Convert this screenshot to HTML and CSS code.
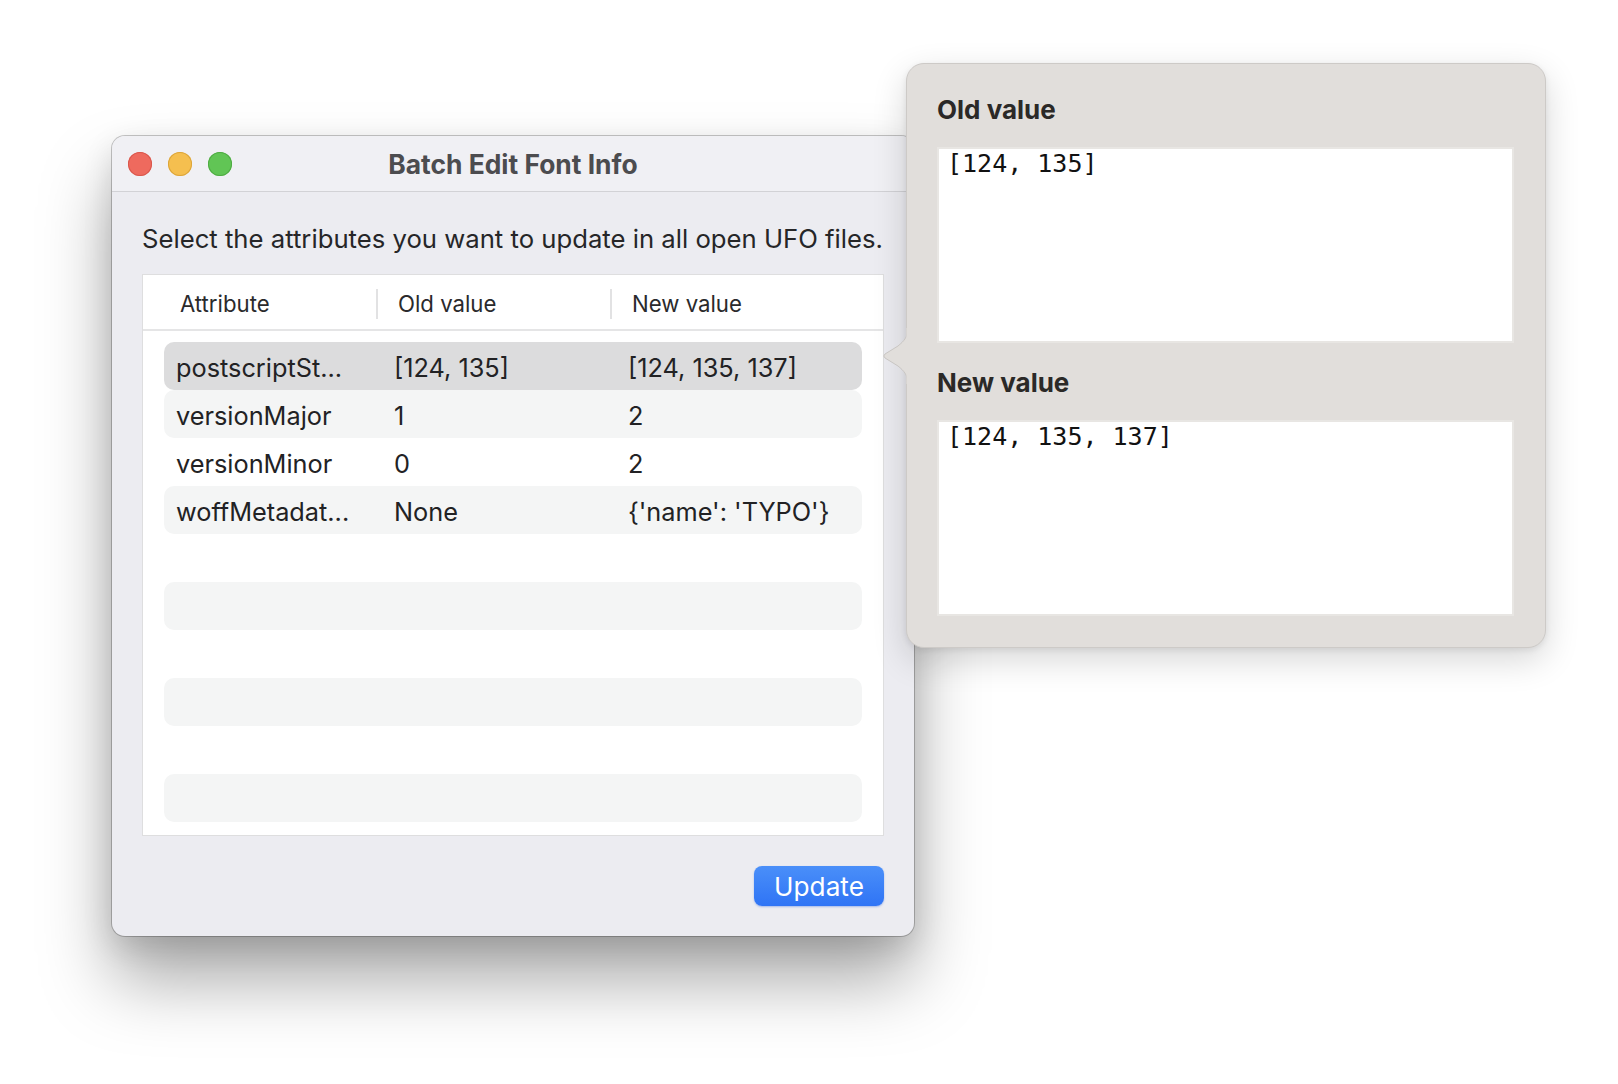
FILE: index.html
```html
<!DOCTYPE html>
<html>
<head>
<meta charset="utf-8">
<link rel="stylesheet" href="styles.css">
</head>
<body>
<div class="desktop">
  <div class="window">
    <div class="titlebar">
      <div class="lights">
        <span class="light red"></span>
        <span class="light yellow"></span>
        <span class="light green"></span>
      </div>
      <div class="title">Batch Edit Font Info</div>
      <div></div>
    </div>
    <div class="content">
      <p class="intro">Select the attributes you want to update in all open UFO files.</p>
      <div class="table">
        <div class="thead">
          <div class="th th-first">Attribute</div>
          <div class="th"><span class="th-label">Old value</span></div>
          <div class="th"><span class="th-label">New value</span></div>
        </div>
        <div class="tbody">
          <div class="row selected"><span>postscriptSt...</span><span>[124, 135]</span><span>[124, 135, 137]</span></div>
          <div class="row alt"><span>versionMajor</span><span>1</span><span>2</span></div>
          <div class="row"><span>versionMinor</span><span>0</span><span>2</span></div>
          <div class="row alt"><span>woffMetadat...</span><span>None</span><span>{'name': 'TYPO'}</span></div>
          <div class="row"></div>
          <div class="row alt"></div>
          <div class="row"></div>
          <div class="row alt"></div>
          <div class="row"></div>
          <div class="row alt"></div>
        </div>
      </div>
      <div class="footer">
        <button class="btn">Update</button>
      </div>
    </div>
  </div>

  <div class="popover">
    <svg class="arrow" width="26" height="56" viewBox="0 0 26 56">
      <path d="M26 0 C26 9 22 13 16 18 L3 26 Q0.5 28 3 30 L16 38 C22 43 26 47 26 56 Z" fill="#e1dedb" stroke="#c9c6c3" stroke-width="1"/>
      <rect x="24.5" y="0" width="2" height="56" fill="#e1dedb"/>
    </svg>
    <div class="pop-heading">Old value</div>
    <div class="pop-field">[124, 135]</div>
    <div class="pop-heading second">New value</div>
    <div class="pop-field">[124, 135, 137]</div>
  </div>
</div>
</body>
</html>
```

FILE: styles.css
```css
* { box-sizing: border-box; }
html, body {
  margin: 0;
  padding: 0;
  background: #ffffff;
}
body {
  font-family: Inter, "Liberation Sans", sans-serif;
}
.desktop {
  position: relative;
  width: 1618px;
  height: 1084px;
  overflow: hidden;
  background: #ffffff;
}
.window {
  position: absolute;
  left: 112px;
  top: 136px;
  width: 802px;
  height: 800px;
  border-radius: 13px;
  background: #ececf1;
  box-shadow: 0 0 0 1px rgba(0,0,0,0.22), 0 44px 70px rgba(0,0,0,0.34), 0 10px 30px rgba(0,0,0,0.12);
  overflow: hidden;
  display: flex;
  flex-direction: column;
}
.titlebar {
  height: 56px;
  flex: none;
  background: #f0f0f4;
  border-bottom: 1px solid #d2d2d6;
  display: grid;
  grid-template-columns: 1fr auto 1fr;
  align-items: center;
}
.lights {
  display: flex;
  gap: 16px;
  padding-left: 16px;
}
.light {
  width: 24px;
  height: 24px;
  border-radius: 50%;
  display: block;
}
.red { background: #ee6a5e; box-shadow: inset 0 0 0 1px #d9574c; }
.yellow { background: #f5bf4f; box-shadow: inset 0 0 0 1px #dca53a; }
.green { background: #61c555; box-shadow: inset 0 0 0 1px #4fab43; }
.title {
  font-weight: 700;
  font-size: 26.4px;
  color: #4c4c4f;
}
.content {
  flex: 1;
  display: flex;
  flex-direction: column;
  padding: 32px 30px 30px 30px;
}
.intro {
  margin: 0 0 20px 0;
  height: 30px;
  line-height: 30px;
  font-size: 25.7px;
  color: #262628;
  white-space: nowrap;
}
.table {
  height: 562px;
  background: #ffffff;
  border: 1px solid #dededf;
  display: flex;
  flex-direction: column;
}
.thead {
  height: 56px;
  flex: none;
  border-bottom: 2px solid #e5e5e6;
  display: grid;
  grid-template-columns: 233px 234px 1fr;
  align-items: center;
  padding-top: 3px;
}
.th {
  font-size: 22.2px;
  color: #2a2a2c;
  height: 30px;
  line-height: 30px;
}
.th-first { padding-left: 37px; }
.th-label {
  display: block;
  border-left: 2px solid #e2e2e3;
  padding-left: 20px;
}
.tbody {
  padding: 11px 21px 0 21px;
  display: flex;
  flex-direction: column;
}
.row {
  height: 48px;
  border-radius: 10px;
  display: grid;
  grid-template-columns: 218px 234px 1fr;
  align-items: center;
  padding-left: 12px;
  padding-top: 2px;
  font-size: 25.3px;
  color: #222224;
  white-space: nowrap;
}
.row.alt { background: #f4f5f5; }
.row.selected { background: #dcdcdd; }
.footer {
  margin-top: 30px;
  display: flex;
  justify-content: flex-end;
}
.btn {
  width: 130px;
  height: 40px;
  border: none;
  border-radius: 8px;
  background: linear-gradient(#4a8ff9, #2f74f5);
  box-shadow: 0 1px 2px rgba(30,90,220,0.35);
  color: #ffffff;
  font-family: Inter, "Liberation Sans", sans-serif;
  font-size: 26.2px;
  padding: 0;
}
.popover {
  position: absolute;
  left: 906px;
  top: 63px;
  width: 640px;
  height: 585px;
  border-radius: 18px;
  background: #e1dedb;
  border: 1px solid #cdcac7;
  box-shadow: 0 12px 34px rgba(0,0,0,0.16), 0 2px 6px rgba(0,0,0,0.08);
  padding: 28.5px 31px 31px 30px;
  display: flex;
  flex-direction: column;
}
.arrow {
  position: absolute;
  left: -25px;
  top: 264px;
}
.pop-heading {
  height: 34px;
  line-height: 34px;
  font-size: 26px;
  font-weight: 700;
  color: #2b2927;
  margin-bottom: 20px;
}
.pop-heading.second { margin-top: 23.5px; }
.pop-field {
  height: 196px;
  background: #ffffff;
  border: 2px solid #e8e6e3;
  font-family: "DejaVu Sans Mono", "Liberation Mono", monospace;
  font-size: 25px;
  line-height: 28px;
  color: #111111;
  padding: 1px 8px;
  white-space: pre;
}
```
